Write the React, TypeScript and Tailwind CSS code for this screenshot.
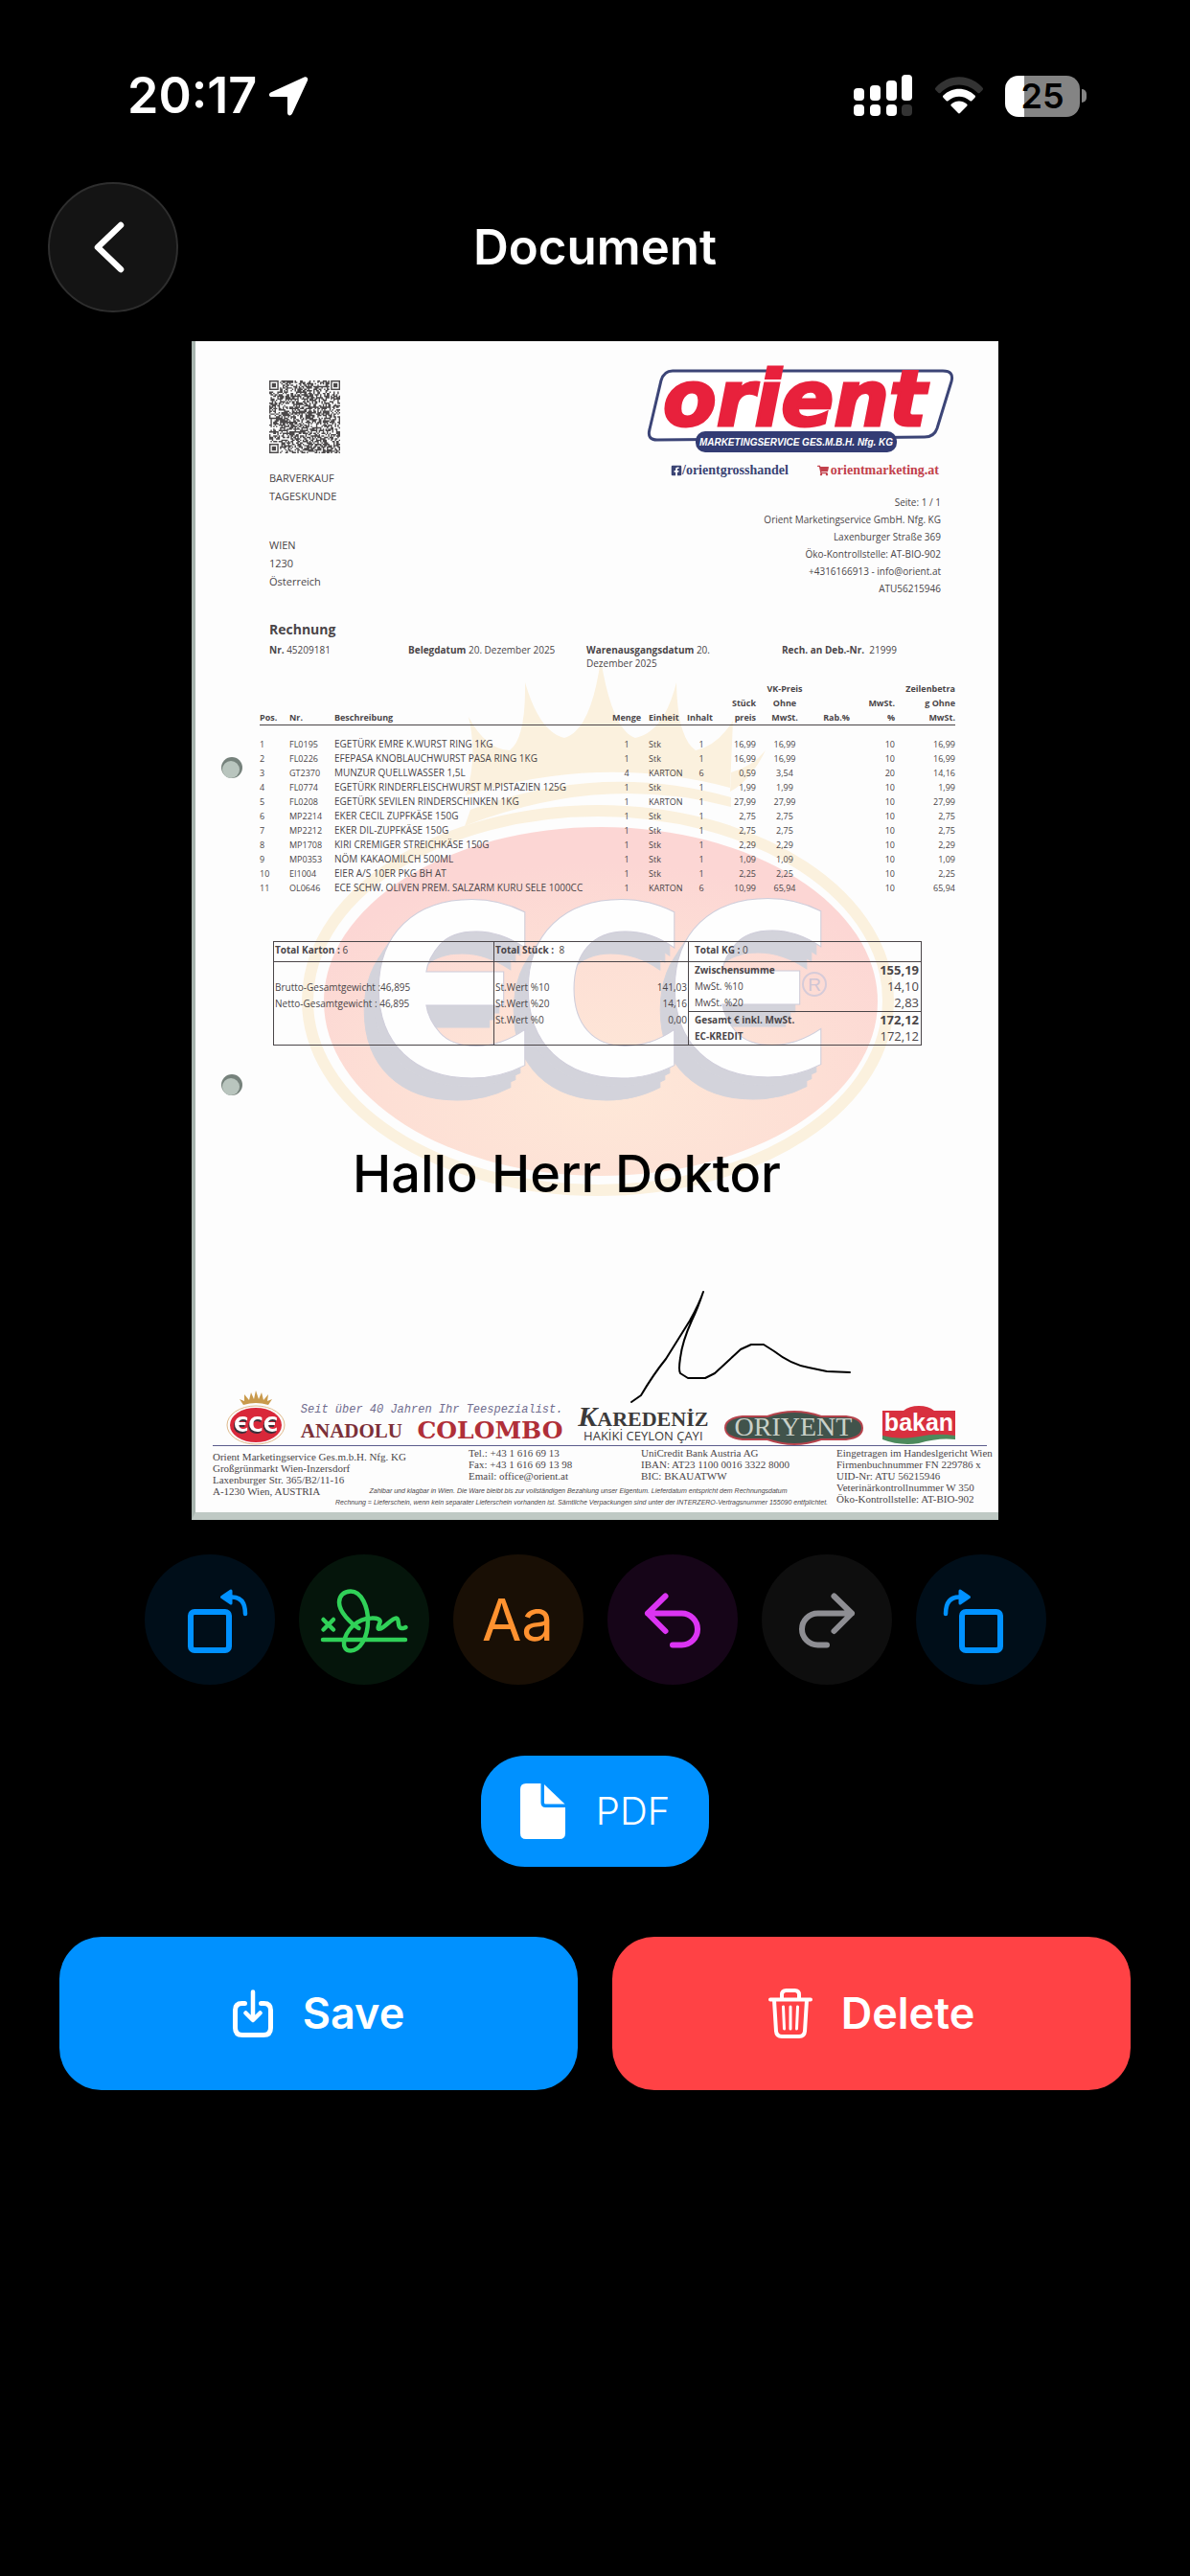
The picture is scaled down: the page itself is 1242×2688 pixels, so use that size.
import { useState, type ReactNode } from 'react';
import { FaFacebookSquare, FaShoppingCart } from 'react-icons/fa';

interface Item {
  nr: string;
  name: string;
  menge: number;
  einheit: string;
  inhalt: number;
  preis: string;
  vk: string;
  mwst: number;
  betrag: string;
}

const items: Item[] = [
  { nr: 'FL0195', name: 'EGETÜRK EMRE K.WURST RING 1KG', menge: 1, einheit: 'Stk', inhalt: 1, preis: '16,99', vk: '16,99', mwst: 10, betrag: '16,99' },
  { nr: 'FL0226', name: 'EFEPASA KNOBLAUCHWURST PASA RING 1KG', menge: 1, einheit: 'Stk', inhalt: 1, preis: '16,99', vk: '16,99', mwst: 10, betrag: '16,99' },
  { nr: 'GT2370', name: 'MUNZUR QUELLWASSER 1,5L', menge: 4, einheit: 'KARTON', inhalt: 6, preis: '0,59', vk: '3,54', mwst: 20, betrag: '14,16' },
  { nr: 'FL0774', name: 'EGETÜRK RINDERFLEISCHWURST M.PISTAZIEN 125G', menge: 1, einheit: 'Stk', inhalt: 1, preis: '1,99', vk: '1,99', mwst: 10, betrag: '1,99' },
  { nr: 'FL0208', name: 'EGETÜRK SEVILEN RINDERSCHINKEN 1KG', menge: 1, einheit: 'KARTON', inhalt: 1, preis: '27,99', vk: '27,99', mwst: 10, betrag: '27,99' },
  { nr: 'MP2214', name: 'EKER CECIL ZUPFKÄSE 150G', menge: 1, einheit: 'Stk', inhalt: 1, preis: '2,75', vk: '2,75', mwst: 10, betrag: '2,75' },
  { nr: 'MP2212', name: 'EKER DIL-ZUPFKÄSE 150G', menge: 1, einheit: 'Stk', inhalt: 1, preis: '2,75', vk: '2,75', mwst: 10, betrag: '2,75' },
  { nr: 'MP1708', name: 'KIRI CREMIGER STREICHKÄSE 150G', menge: 1, einheit: 'Stk', inhalt: 1, preis: '2,29', vk: '2,29', mwst: 10, betrag: '2,29' },
  { nr: 'MP0353', name: 'NÖM KAKAOMILCH 500ML', menge: 1, einheit: 'Stk', inhalt: 1, preis: '1,09', vk: '1,09', mwst: 10, betrag: '1,09' },
  { nr: 'EI1004', name: 'EIER A/S 10ER PKG BH AT', menge: 1, einheit: 'Stk', inhalt: 1, preis: '2,25', vk: '2,25', mwst: 10, betrag: '2,25' },
  { nr: 'OL0646', name: 'ECE SCHW. OLIVEN PREM. SALZARM KURU SELE 1000CC', menge: 1, einheit: 'KARTON', inhalt: 6, preis: '10,99', vk: '65,94', mwst: 10, betrag: '65,94' },
];

const QR_SIZE = 53;

const buildQr = () => {
  let seed = 45209181;
  let d = '';
  for (let y = 0; y < QR_SIZE; y++) {
    for (let x = 0; x < QR_SIZE; x++) {
      seed = (seed * 1103515245 + 12345) % 2147483648;
      const finder = (x < 8 && y < 8) || (x > QR_SIZE - 9 && y < 8) || (x < 8 && y > QR_SIZE - 9);
      if (!finder && seed / 2147483648 > 0.42) d += `M${x} ${y}h1v1h-1z`;
    }
  }
  return d;
};

const qrPath = buildQr();

const QrCode = () => (
  <svg viewBox="0 0 53 53" preserveAspectRatio="none" className="w-[74px] h-[76px] text-[#4b4849]" fill="currentColor">
    <path d={qrPath} />
    {[[0, 0], [46, 0], [0, 46]].map(([x, y]) => (
      <g key={`${x}-${y}`}>
        <rect x={x + 0.5} y={y + 0.5} width="6" height="6" fill="none" stroke="currentColor" />
        <rect x={x + 2} y={y + 2} width="3" height="3" />
      </g>
    ))}
  </svg>
);

const StatusBar = () => (
  <div className="flex items-center justify-between h-[56px] pl-[133px] pr-[108px]">
    <div className="flex items-center gap-3">
      <span className="text-[52px] leading-[56px] font-semibold">20:17</span>
      <svg viewBox="0 0 42 42" className="w-[42px] h-[42px]" fill="white">
        <path d="M37.500 1.500 2.500 17.500C0 19 .5 22 3.500 22H19c.8 0 1 .3 1 1v15.500c0 3.500 3.500 4 5 1L41 5c1-2.500-1-4.500-3.500-3.500z" />
      </svg>
    </div>
    <div className="flex items-center gap-[22px]">
      <svg viewBox="0 0 62 44" className="w-[62px] h-[44px]" fill="white">
        <rect x="0" y="14" width="11" height="13" rx="4" />
        <rect x="17" y="11" width="11" height="16" rx="4" />
        <rect x="34" y="6" width="11" height="21" rx="4" />
        <rect x="50" y="0" width="11" height="27" rx="4" />
        <rect x="0" y="31" width="11" height="12" rx="4" />
        <rect x="17" y="31" width="11" height="12" rx="4" />
        <rect x="34" y="31" width="11" height="12" rx="4" />
        <rect x="50" y="31" width="11" height="12" rx="4" fill="#333" />
      </svg>
      <svg viewBox="0 0 52 40" className="w-[52px] h-[40px]" fill="white">
        <path d="M1.500 11.500C15-3.500 37-3.500 50.500 11.500c.8.900.7 1.700 0 2.400l-2.800 2.800c-.8.800-1.600.7-2.400 0-11-11-27.600-11-38.600 0-.8.700-1.600.8-2.400 0l-2.800-2.800c-.7-.7-.8-1.500 0-2.400z" fill="#333" />
        <path d="M9.600 19.600c9.200-9 23.600-9 32.800 0 .8.800.8 1.600 0 2.400L39.500 25c-.8.800-1.500.7-2.300 0-6.600-5.800-15.800-5.800-22.400 0-.8.700-1.500.8-2.300 0l-2.900-3c-.8-.8-.8-1.600 0-2.400z" />
        <path d="M18 28.400c4.600-3.900 11.400-3.900 16 0 .8.700.9 1.600.1 2.400l-6.900 7c-.8.800-1.600.8-2.400 0l-6.900-7c-.8-.8-.7-1.700.1-2.400z" />
      </svg>
      <div className="flex items-center gap-[2px]">
        <div className="flex items-center justify-center w-[78px] h-[43px] rounded-[14px] bg-[linear-gradient(90deg,#fff_20px,#848484_20px)]">
          <span className="text-[36px] leading-[43px] font-semibold text-black">25</span>
        </div>
        <div className="w-[5px] h-[14px] rounded-r-full bg-[#848484]" />
      </div>
    </div>
  </div>
);

/* Crown, rings and lettering printed under the invoice text */
const Watermark = () => (
  <svg viewBox="201 356 842 1231" className="absolute -left-1 top-0 w-[842px] h-[1231px]" aria-hidden="true">
    <defs>
      <radialGradient id="glow" cx="0.5" cy="0.75" r="0.65">
        <stop offset="0" stopColor="#fee8d8" />
        <stop offset="0.6" stopColor="#fddfd5" />
        <stop offset="1" stopColor="#fcd6d4" />
      </radialGradient>
    </defs>
    <g fill="#fbf1de">
      <path d="M487 830Q500 790 490 748Q508 782 533 783Q550 770 549 712Q564 764 590 770Q618 762 628 688Q640 762 664 770Q694 764 707 712Q708 770 727 783Q750 778 766 752L763 822Q628 786 487 830Z" />
      <path d="M764 806Q786 800 800 783Q784 815 763 826Z" />
      <path d="M492 845Q628 794 764 832V842Q628 806 486 862Z" />
    </g>
    <ellipse cx="625" cy="1044" rx="303" ry="198" fill="none" stroke="#fbf1de" strokeWidth="12" />
    <ellipse cx="628" cy="1045" rx="289" ry="182" fill="url(#glow)" />
    <g
      className="[filter:drop-shadow(-5px_8px_0_#d3d3db)_drop-shadow(-10px_15px_0_#d3d3db)]"
      fontFamily="DejaVu Sans"
      fontWeight="700"
      fontSize="246"
      fill="#fefefe"
      stroke="#cfcdda"
      strokeWidth="1"
    >
      <text x="384" y="1122">Є</text>
      <text x="540" y="1122">C</text>
      <text x="693" y="1121">Є</text>
    </g>
    <circle cx="851" cy="1027" r="12" fill="none" stroke="#d6cbd8" strokeWidth="2" />
    <text x="851" y="1034" textAnchor="middle" fontFamily="Liberation Sans" fontSize="19" fill="#cfc5d4">R</text>
    {[801, 1132].map((y) => (
      <g key={y}>
        <circle cx="243" cy={y} r="11" fill="#76827c" />
        <circle cx="242" cy={y + 2} r="9" fill="#b9c5be" />
      </g>
    ))}
  </svg>
);

const OrientLogo = () => (
  <svg viewBox="0 0 320 88" className="w-[320px] h-[88px] overflow-visible" role="img" aria-label="orient">
    <path d="M26 2H308Q320 2 317 13L302 62Q299 71 289 71L10 74Q-1 74 2 63L14 12Q17 2 26 2Z" fill="white" stroke="#3c4577" strokeWidth="3" />
    <text x="16" y="59" fontFamily="DejaVu Sans" fontWeight="700" fontStyle="italic" fontSize="81" fill="#e8213c" stroke="#e8213c" strokeWidth="3">orient</text>
    <rect x="50" y="65" width="210" height="22" rx="10" fill="#333c74" />
    <text x="155" y="80" textAnchor="middle" fontFamily="Liberation Sans" fontWeight="700" fontStyle="italic" fontSize="10" fill="#fff">MARKETINGSERVICE GES.M.B.H. Nfg. KG</text>
  </svg>
);

const ItemsTable = () => (
  <table className="table-fixed w-[726px] text-[9px] leading-[15px] text-left">
    <colgroup>
      <col className="w-[31px]" />
      <col className="w-[47px]" />
      <col className="w-[282px]" />
      <col className="w-[46px]" />
      <col className="w-[40px]" />
      <col className="w-[30px]" />
      <col className="w-[42px]" />
      <col className="w-[60px]" />
      <col className="w-[48px]" />
      <col className="w-[37px]" />
      <col className="w-[63px]" />
    </colgroup>
    <thead className="align-bottom border-b border-[#4a4548] whitespace-nowrap">
      <tr>
        <th>Pos.</th>
        <th>Nr.</th>
        <th>Beschreibung</th>
        <th className="text-center">Menge</th>
        <th>Einheit</th>
        <th>Inhalt</th>
        <th className="text-right">Stück<br />preis</th>
        <th className="text-center">VK-Preis<br />Ohne<br />MwSt.</th>
        <th className="text-center">Rab.%</th>
        <th className="text-right">MwSt.<br />%</th>
        <th className="text-right">Zeilenbetra<br />g Ohne<br />MwSt.</th>
      </tr>
    </thead>
    <tbody className="whitespace-nowrap before:block before:h-3">
      {items.map((item, i) => (
        <tr key={item.nr}>
          <td>{i + 1}</td>
          <td>{item.nr}</td>
          <td className="text-[10px] leading-[15px]">{item.name}</td>
          <td className="text-center">{item.menge}</td>
          <td>{item.einheit}</td>
          <td className="text-center">{item.inhalt}</td>
          <td className="text-right">{item.preis}</td>
          <td className="text-center">{item.vk}</td>
          <td></td>
          <td className="text-right">{item.mwst}</td>
          <td className="text-right">{item.betrag}</td>
        </tr>
      ))}
    </tbody>
  </table>
);

const SumRow = ({ label, value, bold = false, strong = false }: { label: string; value: string; bold?: boolean; strong?: boolean }) => (
  <div className="flex items-center justify-between pl-1.5 pr-0.5 h-[17px]">
    <span className={bold || strong ? 'font-bold' : ''}>{label}</span>
    <span className={bold ? 'text-[13px] font-bold' : 'text-[13px]'}>{value}</span>
  </div>
);

const Totals = () => (
  <div className="grid grid-cols-[230px_203px_1fr] w-[677px] border border-[#4a4548] text-[10px] leading-[17px]">
    <div className="border-r border-[#4a4548]">
      <div className="h-[21px] border-b border-[#4a4548] px-px"><b>Total Karton :</b> 6</div>
      <div className="mt-[18px] px-px">Brutto-Gesamtgewicht :46,895</div>
      <div className="px-px">Netto-Gesamtgewicht : 46,895</div>
    </div>
    <div className="border-r border-[#4a4548]">
      <div className="h-[21px] border-b border-[#4a4548] px-px"><b>Total Stück :</b>&nbsp; 8</div>
      <div className="mt-[18px] px-px flex justify-between"><span>St.Wert %10</span><span>141,03</span></div>
      <div className="px-px flex justify-between"><span>St.Wert %20</span><span>14,16</span></div>
      <div className="px-px flex justify-between"><span>St.Wert %0</span><span>0,00</span></div>
    </div>
    <div>
      <div className="h-[21px] border-b border-[#4a4548] pl-1.5"><b>Total KG :</b> 0</div>
      <SumRow label="Zwischensumme" value="155,19" bold />
      <SumRow label="MwSt. %10" value="14,10" />
      <SumRow label="MwSt. %20" value="2,83" />
      <div className="border-t border-[#4a4548]">
        <SumRow label="Gesamt € inkl. MwSt." value="172,12" bold />
        <SumRow label="EC-KREDIT" value="172,12" strong />
      </div>
    </div>
  </div>
);

const EceLogo = () => (
  <svg viewBox="0 0 62 57" className="w-[62px] h-[57px]" role="img" aria-label="ECE">
    <path d="M18 15 14 9 19 11 19 4 24 10 26 2 29 9 31 0 34 9 37 2 39 10 44 4 43 11 48 9 44 15Q31 11 18 15Z" fill="#c99a4c" />
    <ellipse cx="31" cy="36" rx="30" ry="20" fill="none" stroke="#dfb98a" />
    <ellipse cx="31" cy="36" rx="27" ry="18" fill="#d9283a" />
    <text x="31" y="43" textAnchor="middle" fontFamily="DejaVu Sans" fontWeight="700" fontSize="21" fill="#fff" className="[filter:drop-shadow(-1px_2px_0_#3a2f3a)]">ЄCЄ</text>
  </svg>
);

const OriyentLogo = () => (
  <svg viewBox="0 0 148 36" className="w-[148px] h-[36px]" role="img" aria-label="Oriyent">
    <path d="M20 6H46Q60 1 74 1Q88 1 102 6H128Q145 8 145 18Q145 28 128 30H102Q88 35 74 35Q60 35 46 30H20Q2 28 2 18Q2 8 20 6Z" fill="#41534b" stroke="#b5434c" strokeWidth="2" />
    <text x="73" y="26" textAnchor="middle" fontFamily="Liberation Serif" fontSize="28" fill="#c9d0c8">ORIYENT</text>
  </svg>
);

const BakanLogo = () => (
  <svg viewBox="0 0 80 42" className="w-[80px] h-[42px]" role="img" aria-label="bakan">
    <path d="M2 30H78V36Q60 34 40 40Q20 43 2 36Z" fill="#4c8a5c" />
    <path d="M2 6H24Q30 1 40 1Q50 1 56 6H78V32Q58 29 40 33Q20 37 2 32Z" fill="#d8303f" />
    <text x="40" y="27" textAnchor="middle" fontFamily="Liberation Sans" fontWeight="700" fontSize="25" fill="#fff">bakan</text>
  </svg>
);

const InvoiceFooter = () => (
  <footer className="ml-[18px] mr-[12px] pb-1">
    <div className="flex items-end justify-between pl-[14px] pr-[31px] border-b border-[#5b5c8c] whitespace-nowrap">
      <EceLogo />
      <div>
        <p className="text-[12px] leading-[14px] italic text-[#6f6c8e] font-['Liberation_Mono',monospace]">
          Seit über 40 Jahren Ihr Teespezialist.
        </p>
        <div className="flex items-center justify-between leading-[30px]">
          <span className="text-[21px] font-bold text-[#7c3038] font-['Liberation_Serif',serif]">ANADOLU</span>
          <span className="text-[25px] font-bold text-[#b02f38] font-['DejaVu_Serif',serif]">COLOMBO</span>
        </div>
      </div>
      <div className="pb-1 text-center text-[#3b3a3a]">
        <p className="text-[22px] leading-[22px] font-bold font-['Liberation_Serif',serif]">
          <span className="text-[30px] italic">K</span>AREDENİZ
        </p>
        <p className="text-[13px] leading-[12px] font-['Open_Sans',sans-serif]">HAKİKİ CEYLON ÇAYI</p>
      </div>
      <OriyentLogo />
      <BakanLogo />
    </div>
    <div className="grid grid-cols-[128px_139px_180px_204px_1fr] grid-rows-[36px_auto] pt-px text-[11px] leading-[12px] whitespace-nowrap font-['Liberation_Serif',serif]">
      <address className="not-italic col-start-1 col-span-2 row-start-1 row-span-2 pt-1">
        Orient Marketingservice Ges.m.b.H. Nfg. KG<br />
        Großgrünmarkt Wien-Inzersdorf<br />
        Laxenburger Str. 365/B2/11-16<br />
        A-1230 Wien, AUSTRIA
      </address>
      <p className="col-start-3 row-start-1">
        Tel.: +43 1 616 69 13<br />
        Fax: +43 1 616 69 13 98<br />
        Email: office@orient.at
      </p>
      <p className="col-start-4 row-start-1">
        UniCredit Bank Austria AG<br />
        IBAN: AT23 1100 0016 3322 8000<br />
        BIC: BKAUATWW
      </p>
      <p className="col-start-5 row-start-1 row-span-2">
        Eingetragen im Handeslgericht Wien<br />
        Firmenbuchnummer FN 229786 x<br />
        UID-Nr: ATU 56215946<br />
        Veterinärkontrollnummer W 350<br />
        Öko-Kontrollstelle: AT-BIO-902
      </p>
      <p className="col-start-2 col-span-3 row-start-2 pt-1 pr-4 text-center text-[7px] leading-[12px] italic font-['Liberation_Sans',sans-serif]">
        Zahlbar und klagbar in Wien. Die Ware bleibt bis zur vollständigen Bezahlung unser Eigentum. Lieferdatum entspricht dem Rechnungsdatum<br />
        Rechnung = Lieferschein, wenn kein separater Lieferschein vorhanden ist. Sämtliche Verpackungen sind unter der INTERZERO-Vertragsnummer 155090 entfplichtet.
      </p>
    </div>
  </footer>
);

const Invoice = () => (
  <article className="relative w-[842px] max-w-full mx-auto bg-[#fdfdfd] text-[#4a4548] border-l-4 border-b-8 border-l-[#a9b6b0] border-b-[#bfc9c4] font-['Open_Sans','Noto_Sans',sans-serif]">
    <Watermark />
    <div className="relative">
      <div className="flex justify-between pl-[77px] pr-[46px] pt-[29px]">
        <div className="pt-3 text-[11px] leading-[19px]">
          <QrCode />
          <p className="mt-4">BARVERKAUF<br />TAGESKUNDE</p>
          <p className="mt-8">WIEN<br />1230<br />Österreich</p>
        </div>
        <div>
          <OrientLogo />
          <div className="flex items-center justify-between mt-[9px] pl-6 pr-4 text-[14px] leading-[18px] font-bold font-['Liberation_Serif',serif]">
            <span className="flex items-center text-[#3a4474]"><FaFacebookSquare className="w-3 h-3" />/orientgrosshandel</span>
            <span className="flex items-center gap-0.5 text-[#c2414c]"><FaShoppingCart className="w-3 h-3" />orientmarketing.at</span>
          </div>
          <p className="mt-[15px] pr-3.5 text-right text-[10px] leading-[18px]">
            Seite: 1 / 1<br />
            Orient Marketingservice GmbH. Nfg. KG<br />
            Laxenburger Straße 369<br />
            Öko-Kontrollstelle: AT-BIO-902<br />
            +4316166913 - info@orient.at<br />
            ATU56215946
          </p>
        </div>
      </div>

      <div className="pl-[77px] mt-6">
        <h2 className="text-[14px] leading-5 font-bold">Rechnung</h2>
        <div className="grid grid-cols-[145px_186px_204px_1fr] mt-1 text-[10px] leading-[14px]">
          <p><b>Nr.</b> 45209181</p>
          <p><b>Belegdatum</b> 20. Dezember 2025</p>
          <p><b>Warenausgangsdatum</b> 20.<br />Dezember 2025</p>
          <p><b>Rech. an Deb.-Nr.</b>&nbsp; 21999</p>
        </div>
      </div>

      <div className="pl-[67px] mt-3">
        <ItemsTable />
      </div>
      <div className="pl-[81px] mt-12">
        <Totals />
      </div>
      <div className="h-[360px]" />
      <InvoiceFooter />
    </div>

    {/* Annotations placed on top of the scan */}
    <p className="absolute left-[164px] top-[836px] text-[54px] leading-[66px] font-medium text-black whitespace-nowrap font-['Inter',sans-serif]">
      Hallo Herr Doktor
    </p>
    <svg viewBox="0 0 232 120" className="absolute left-[454px] top-[990px] w-[232px] h-[120px]" fill="none" stroke="black" strokeWidth="2" strokeLinejoin="round" strokeLinecap="round">
      <path d="M1 117 11 110Q24 88 37 72 52 48 62 32 72 14 76 2 70 20 64 32 54 54 52 71 50 84 52 87L60 92H78L88 87Q100 76 115 62L126 57H139L150 64Q168 78 186 81L205 85 229 86" />
    </svg>
  </article>
);

const RotateIcon = ({ flip = false }: { flip?: boolean }) => (
  <svg viewBox="0 0 136 136" className={flip ? 'w-full h-full -scale-x-100' : 'w-full h-full'} fill="none" stroke="#0091ff" strokeLinecap="round" strokeLinejoin="round">
    <rect x="48" y="60" width="40" height="40" rx="4" strokeWidth="6" />
    <path d="M91 44.500Q105 44.500 105 62" strokeWidth="4.500" />
    <path d="M80.500 44.500 90 38v13z" fill="#0091ff" strokeWidth="3" />
  </svg>
);

const SignatureIcon = () => (
  <svg viewBox="0 0 136 136" className="w-full h-full" fill="none" stroke="#30d158" strokeWidth="4.500" strokeLinecap="round" strokeLinejoin="round">
    <path d="M25.500 68 36 78.500M36 68 25.500 78.500M25 89H111" />
    <path d="M62.500 77C54 72 42 60 42 50C42 43 47 38.500 54 38.500C66 38.500 72 56 72 69C72 88 63 100.500 54 100.500C49 100.500 46.500 97 47 92C48.500 80 60 66.500 76 66.500C82 66 85.500 68 84.500 71C83 75 81 79 85 77.500C90 76 97 66.500 101.500 66.500C105.500 66.500 102 77 107 77C109 77 110 76.500 111.500 76" />
  </svg>
);

const UndoIcon = ({ flip = false }: { flip?: boolean }) => (
  <svg viewBox="0 0 136 136" className={flip ? 'w-full h-full -scale-x-100' : 'w-full h-full'} fill="none" stroke="currentColor" strokeWidth="6" strokeLinecap="round" strokeLinejoin="round">
    <path d="M60.500 43.500 42 61.500l18.500 18.500M42 61.500H77.500A16.500 16.500 0 0 1 77.500 94.500H68" />
  </svg>
);

const ToolButton = ({ label, color, disabled, children }: { label: string; color: string; disabled?: boolean; children: ReactNode }) => (
  <button type="button" aria-label={label} disabled={disabled} className={`flex items-center justify-center w-[136px] h-[136px] rounded-full ${color}`}>
    {children}
  </button>
);

const App = () => {
  const [deleted, setDeleted] = useState(false);

  return (
    <div className="min-h-screen bg-black text-white pt-[72px] pb-[500px] font-['Inter',sans-serif]">
      <StatusBar />

      {/* Navigation */}
      <header className="grid grid-cols-[136px_1fr_136px] items-center mt-[62px] px-[50px]">
        <button type="button" aria-label="Back" className="flex items-center justify-center w-[136px] h-[136px] rounded-full bg-[#141414] border-2 border-[#2e2e2e]">
          <svg viewBox="0 0 34 54" className="w-[34px] h-[54px] mr-2" fill="none" stroke="white" strokeWidth="6.500" strokeLinecap="round" strokeLinejoin="round">
            <path d="M29 4 5 27 29 50" />
          </svg>
        </button>
        <h1 className="text-center text-[51px] leading-[60px] font-semibold">Document</h1>
      </header>

      <main className="mt-[30px]">
        {!deleted && <Invoice />}

        {/* Tools */}
        <div className="flex justify-center gap-[25px] mt-[36px]">
          <ToolButton label="Rotate left" color="bg-[#000e19]"><RotateIcon /></ToolButton>
          <ToolButton label="Sign" color="bg-[#05150b]"><SignatureIcon /></ToolButton>
          <ToolButton label="Text" color="bg-[#190f05]">
            <span className="text-[60px] leading-none text-[#ff9230]">Aa</span>
          </ToolButton>
          <ToolButton label="Undo" color="bg-[#160518] text-[#db34f2]"><UndoIcon /></ToolButton>
          <ToolButton label="Redo" color="bg-[#0e0e0e] text-[#8e8e93]" disabled><UndoIcon flip /></ToolButton>
          <ToolButton label="Rotate right" color="bg-[#000e19]"><RotateIcon flip /></ToolButton>
        </div>

        {/* Format */}
        <div className="flex justify-center mt-[74px]">
          <button type="button" className="flex items-center justify-center gap-[32px] w-[238px] h-[116px] rounded-[46px] bg-[#0091ff]">
            <svg viewBox="0 0 47 58" className="w-[47px] h-[58px]" fill="white">
              <path d="M6 0H21.500V20Q21.500 25 26.500 25H47V52Q47 58 41 58H6Q0 58 0 52V6Q0 0 6 0Z" />
              <path d="M25 1 46.500 21.500H26.500Q25 21.500 25 20Z" />
            </svg>
            <span className="text-[40px] leading-[48px] font-light">PDF</span>
          </button>
        </div>

        {/* Actions */}
        <div className="grid grid-cols-2 gap-[36px] mt-[73px] px-[62px]">
          <button type="button" className="flex items-center justify-center gap-[31px] h-[160px] rounded-[44px] bg-[#0091ff] text-[45px] font-semibold">
            <svg viewBox="0 0 42 50" className="w-[42px] h-[50px]" fill="none" stroke="white" strokeWidth="5" strokeLinecap="round" strokeLinejoin="round">
              <path d="M12.500 14.500H9.500Q2.500 14.500 2.500 21.500V40Q2.500 47.500 10 47.500H32Q39.500 47.500 39.500 40V21.500Q39.500 14.500 32.500 14.500H29.500" />
              <path d="M21 2.500V31M13.500 24.500 21 32 28.500 24.500" strokeWidth="4.500" />
            </svg>
            Save
          </button>
          <button type="button" onClick={() => setDeleted(true)} className="flex items-center justify-center gap-[30px] h-[160px] rounded-[44px] bg-[#ff4245] text-[45px] font-semibold">
            <svg viewBox="0 0 46 52" className="w-[46px] h-[52px]" fill="none" stroke="white" strokeWidth="4" strokeLinecap="round" strokeLinejoin="round">
              <path d="M2 11.500H44M14 11V6.500Q14 2 18.500 2H27.500Q32 2 32 6.500V11M6 12 8 44.500Q8.500 50 14 50H32Q37.500 50 38 44.500L40 12" />
              <path d="M15.500 19 16.500 42M23 19V42M30.500 19 29.500 42" strokeWidth="3" />
            </svg>
            Delete
          </button>
        </div>
      </main>
    </div>
  );
};

export default App;
